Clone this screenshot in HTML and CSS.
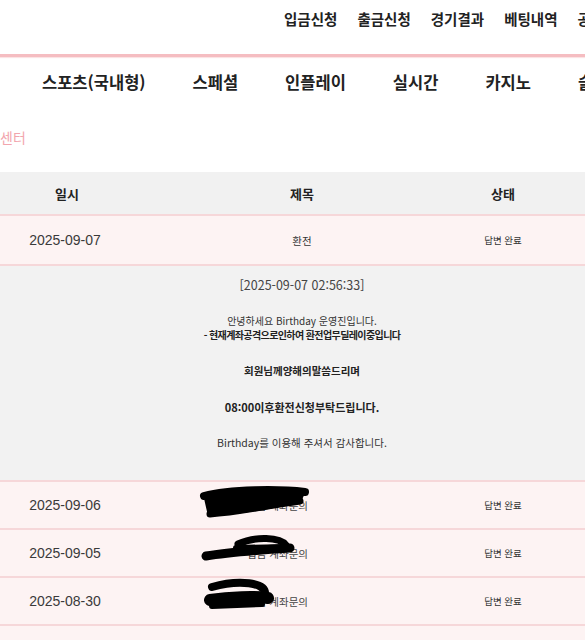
FILE: index.html
```html
<!DOCTYPE html>
<html lang="ko">
<head>
<meta charset="utf-8">
<link rel="stylesheet" href="styles.css">
</head>
<body>
<div class="page">
  <header class="topbar">
    <nav class="util">
      <a>입금신청</a><a>출금신청</a><a>경기결과</a><a>베팅내역</a><a>공지사항</a>
    </nav>
  </header>
  <nav class="gnb">
    <a>스포츠(국내형)</a><a>스페셜</a><a>인플레이</a><a>실시간</a><a>카지노</a><a>슬롯</a>
  </nav>
  <h2 class="title">센터</h2>
  <div class="table">
    <div class="row head">
      <div class="c1">일시</div><div class="c2">제목</div><div class="c3">상태</div>
    </div>
    <div class="row first">
      <div class="c1 date">2025-09-07</div><div class="c2 subj">환전</div><div class="c3 state">답변 완료</div>
    </div>
    <div class="answer">
      <p class="stamp">[2025-09-07 02:56:33]</p>
      <p>안녕하세요 Birthday 운영진입니다.<br><b class="tight">- 현재계좌공격으로인하여 환전업무딜레이중입니다</b></p>
      <p class="l3"><b>회원님께양해의말씀드리며</b></p>
      <p class="l4"><b>08:00이후환전신청부탁드립니다.</b></p>
      <p class="l5">Birthday를 이용해 주셔서 감사합니다.</p>
    </div>
    <div class="row">
      <div class="c1 date">2025-09-06</div><div class="c2 subj redact">입금 계좌문의</div><div class="c3 state">답변 완료</div>
      <svg class="scribble" viewBox="0 0 585 48" width="585" height="48">
        <path d="M203,12 C240,5 290,5 306,9 L300,22 C270,26 240,33 208,34 Z" fill="#000"/>
        <path d="M204,14 C230,7 280,7 305,10" stroke="#000" stroke-width="8" fill="none" stroke-linecap="round"/>
        <path d="M210,32 C240,30 270,23 300,19" stroke="#000" stroke-width="7" fill="none" stroke-linecap="round"/>
      </svg>
    </div>
    <div class="row">
      <div class="c1 date">2025-09-05</div><div class="c2 subj redact">입금 계좌문의</div><div class="c3 state">답변 완료</div>
      <svg class="scribble" viewBox="0 0 585 48" width="585" height="48">
        <path d="M206,26 C230,22 260,20 290,18" stroke="#000" stroke-width="9" fill="none" stroke-linecap="round"/>
        <path d="M238,14 C255,6 280,7 286,15" stroke="#000" stroke-width="7" fill="none" stroke-linecap="round"/>
        <path d="M236,18 L288,17" stroke="#000" stroke-width="6" fill="none" stroke-linecap="round"/>
      </svg>
    </div>
    <div class="row">
      <div class="c1 date">2025-08-30</div><div class="c2 subj redact">입금 계좌문의</div><div class="c3 state">답변 완료</div>
      <svg class="scribble" viewBox="0 0 585 48" width="585" height="48">
        <path d="M212,9 C240,1 265,5 265,15" stroke="#000" stroke-width="8" fill="none" stroke-linecap="round"/>
        <path d="M210,22 C230,19 255,18 268,20" stroke="#000" stroke-width="12" fill="none" stroke-linecap="round"/>
        <path d="M212,28 L262,26" stroke="#000" stroke-width="6" fill="none" stroke-linecap="round"/>
      </svg>
    </div>
    <div class="row last"></div>
  </div>
</div>
</body>
</html>
```
FILE: styles.css
```css
* { box-sizing: border-box; }
html, body { margin: 0; padding: 0; }
body {
  width: 585px;
  height: 640px;
  overflow: hidden;
  background: #fff;
  font-family: "Noto Sans CJK KR", "Noto Sans", sans-serif;
  color: #222;
}
.page { width: 585px; height: 640px; overflow: hidden; }
a { color: inherit; text-decoration: none; }

.topbar {
  height: 57px;
  border-bottom: 3px solid #f5bdc1;
  box-shadow: 0 1px 1px #fbe3e4;
}
.util {
  display: flex;
  gap: 20px;
  padding-left: 284px;
  white-space: nowrap;
  height: 36px;
  align-items: center;
  font-size: 14.5px;
  font-weight: 700;
  color: #222;
  overflow: hidden;
}
.util a { flex: none; }

.gnb {
  display: flex;
  gap: 47px;
  padding-left: 42px;
  height: 50px;
  align-items: center;
  white-space: nowrap;
  font-size: 16.5px;
  font-weight: 700;
  color: #222;
  overflow: hidden;
}
.gnb a { flex: none; }

.title {
  margin: 22px 0 0 0;
  font-size: 14px;
  line-height: 16px;
  font-weight: 400;
  color: #f2a5ad;
}

.table {
  margin-top: 27px;
  width: 604px;
}
.row {
  position: relative;
  display: grid;
  grid-template-columns: 134px 336px 66px 68px;
  height: 48px;
  align-items: center;
  background: #fdf3f3;
  border-bottom: 2px solid #f6d7d9;
}
.row.first { height: 50px; }
.row.last { height: 14px; border-bottom: 0; }
.row > div { text-align: center; white-space: nowrap; }
.row.head {
  height: 44px;
  background: #f1f1f1;
  font-size: 13px;
  font-weight: 700;
  color: #222;
}
.date {
  font-family: "Liberation Sans", "Noto Sans CJK KR", sans-serif;
  font-size: 14px;
  color: #3a3a3a;
  padding-right: 4px;
}
.subj { font-size: 10.5px; color: #333; }
.subj.redact { text-align: right !important; padding-right: 162px; color: #444; }
.state { font-size: 9.5px; color: #333; }
.scribble {
  position: absolute;
  left: 0;
  top: 0;
}

.answer {
  background: #f2f2f2;
  border-bottom: 2px solid #f6d7d9;
  text-align: center;
  padding: 12px 0 30px;
  height: 216px;
  font-size: 10px;
  line-height: 14px;
  color: #333;
}
.answer p { margin: 22px 0 0; }
.answer p.stamp { margin-top: 0; font-size: 12.5px; color: #444; }
.answer b { font-weight: 700; color: #222; }
.answer .tight { letter-spacing: -0.6px; }
.answer p.l3 { font-size: 10.5px; }
.answer p.l4 { font-size: 11px; }
.answer p.l5 { font-size: 10.5px; }
```
